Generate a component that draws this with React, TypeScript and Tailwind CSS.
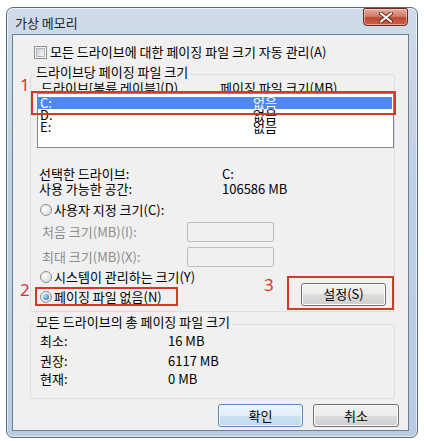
import type { ReactNode } from "react";

function Checkbox() {
  return (
    <span className="flex h-[13px] w-[13px] shrink-0 items-center justify-center border border-[#8e8f8f] bg-[#f6f6f6]">
      <span className="h-[9px] w-[9px] border border-[#b4b8bd] bg-[linear-gradient(135deg,#c9ced4,#f8f8f8)]" />
    </span>
  );
}

function Radio({ checked }: { checked?: boolean }) {
  return (
    <span className="flex h-[12px] w-[12px] shrink-0 items-center justify-center rounded-full border border-[#8e8f8f] bg-[radial-gradient(circle_at_40%_40%,#ffffff,#d2d2d2)]">
      {checked && (
        <span className="h-[6px] w-[6px] rounded-full bg-[radial-gradient(circle_at_35%_35%,#b5e2ff,#1a5cb0)]" />
      )}
    </span>
  );
}

function WinButton({ children, primary, width }: { children: ReactNode; primary?: boolean; width: string }) {
  return (
    <button
      type="button"
      className={
        primary
          ? `${width} flex h-[23px] items-center justify-center rounded-[3px] border border-[#4f8cc1] bg-[linear-gradient(#eef6fc,#e0eef9_50%,#cde2f4_50%,#c0d9ef)] shadow-[inset_0_0_0_1px_#f4fafe]`
          : `${width} flex h-[23px] items-center justify-center rounded-[3px] border border-[#707070] bg-[linear-gradient(#f2f2f2,#ebebeb_50%,#dddddd_50%,#cfcfcf)] shadow-[inset_0_0_0_1px_#fcfcfc]`
      }
    >
      {children}
    </button>
  );
}

function Legend({ children }: { children: ReactNode }) {
  return <legend className="ml-[3px] px-[2px] pb-[4px] leading-[14px]">{children}</legend>;
}

export default function App() {
  return (
    <div className="relative h-[441px] w-[424px] overflow-hidden bg-white font-['Noto_Sans_CJK_KR',sans-serif] text-[13px] text-black">
      {/* window frame */}
      <div className="ml-[6px] mt-[7px] flex h-[431px] w-[412px] flex-col rounded-[7px] border border-[#5b6b7e] bg-[linear-gradient(180deg,#cfdbe8,#bfd0e3_40%,#b9cbe1)] shadow-[inset_0_0_0_1px_rgba(255,255,255,0.55)]">
        {/* title bar */}
        <div className="flex h-[26px] items-start">
          <span className="pl-[8px] pt-[8px] leading-[14px] text-[#1e1e1e]">가상 메모리</span>
          <div className="ml-auto mr-[9px] flex h-[18px] w-[45px] items-center justify-center rounded-b-[4px] rounded-t-[2px] border border-[#6b2a22] bg-[linear-gradient(#e6aca0,#d27a68_45%,#bd4a34_55%,#c8604a)] shadow-[inset_0_0_0_1px_rgba(255,230,220,0.5)]">
            <svg width="14" height="11" viewBox="0 0 14 11">
              <path d="M2 1.5 L12 9.5 M12 1.5 L2 9.5" stroke="#5a2a22" strokeWidth="4" strokeLinecap="round" />
              <path d="M2 1.5 L12 9.5 M12 1.5 L2 9.5" stroke="#ffffff" strokeWidth="2.2" strokeLinecap="round" />
            </svg>
          </div>
        </div>

        {/* client area */}
        <div className="ml-[5px] flex h-[397px] w-[397px] flex-col border border-[#6d7f94] bg-[#f0f0f0]">
          <div className="mt-[10px] flex h-[14px] items-center gap-[3px] pl-[21px]">
            <Checkbox />
            <span>모든 드라이브에 대한 페이징 파일 크기 자동 관리(A)</span>
          </div>

          <fieldset className="ml-[17px] mt-[6px] w-[365px] rounded-[3px] border border-[#d5dfe5] pb-[5px]">
            <Legend>드라이브당 페이징 파일 크기</Legend>
            <div className="flex h-[10px] pl-[10px] leading-[10px]">
              <span className="w-[179px]">드라이브[볼륨 레이블](D)</span>
              <span>페이징 파일 크기(MB)</span>
            </div>
            <div className="relative ml-[6px] h-[55px] w-[357px] border border-[#828790] bg-white pt-[3px] leading-[12px]">
              <div className="mr-[1px] flex h-[12px] bg-[#4f88f0] pl-[2px] text-white">
                <span className="w-[213px]">C:</span>
                <span>없음</span>
              </div>
              <div className="flex h-[12px] pl-[2px]">
                <span className="w-[213px]">D:</span>
                <span>없음</span>
              </div>
              <div className="flex h-[12px] pl-[2px]">
                <span className="w-[213px]">E:</span>
                <span>없음</span>
              </div>
            </div>

            <div className="mt-[18px] flex h-[15px] items-center pl-[8px]">
              <span className="w-[183px]">선택한 드라이브:</span>
              <span>C:</span>
            </div>
            <div className="flex h-[15px] items-center pl-[8px]">
              <span className="w-[183px]">사용 가능한 공간:</span>
              <span>106586 MB</span>
            </div>

            <div className="mt-[5px] flex h-[18px] items-center gap-[2px] pl-[9px]">
              <Radio />
              <span>사용자 지정 크기(C):</span>
            </div>
            <div className="mt-[3px] flex h-[20px] items-center pl-[11px] text-[#8c8c8c]">
              <span className="w-[145px]">처음 크기(MB)(I):</span>
              <span className="h-[20px] w-[87px] rounded-[2px] border border-[#bcbcbc] bg-[#f0f0f0]" />
            </div>
            <div className="mt-[5px] flex h-[20px] items-center pl-[11px] text-[#8c8c8c]">
              <span className="w-[145px]">최대 크기(MB)(X):</span>
              <span className="h-[20px] w-[87px] rounded-[2px] border border-[#bcbcbc] bg-[#f0f0f0]" />
            </div>

            <div className="mt-[2px] flex items-start">
              <div className="flex flex-col pl-[9px]">
                <div className="flex h-[16px] items-center gap-[2px]">
                  <Radio />
                  <span>시스템이 관리하는 크기(Y)</span>
                </div>
                <div className="mt-[4px] flex h-[16px] items-center gap-[2px]">
                  <Radio checked />
                  <span>페이징 파일 없음(N)</span>
                </div>
              </div>
              <div className="ml-auto mr-[8px] mt-[14px]">
                <WinButton width="w-[85px]">
                  <span className="h-[21px] leading-[19px]">설정(S)</span>
                </WinButton>
              </div>
            </div>
          </fieldset>

          <fieldset className="ml-[17px] mt-[3px] w-[365px] rounded-[3px] border border-[#d5dfe5] pb-[11px]">
            <Legend>모든 드라이브의 총 페이징 파일 크기</Legend>
            <div className="flex h-[16px] items-center pl-[9px]">
              <span className="w-[128px]">최소:</span>
              <span>16 MB</span>
            </div>
            <div className="mt-[4px] flex h-[16px] items-center pl-[9px]">
              <span className="w-[128px]">권장:</span>
              <span>6117 MB</span>
            </div>
            <div className="mt-[2px] flex h-[16px] items-center pl-[9px]">
              <span className="w-[128px]">현재:</span>
              <span>0 MB</span>
            </div>
          </fieldset>

          <div className="mt-[5px] flex justify-end gap-[10px] pr-[9px]">
            <WinButton primary width="w-[85px]">확인</WinButton>
            <WinButton width="w-[86px]">취소</WinButton>
          </div>
        </div>
      </div>

      {/* red annotations */}
      <div className="absolute left-[31px] top-[91px] h-[24px] w-[365px] border-2 border-[#d5382b]" />
      <div className="absolute left-[35px] top-[287px] h-[19px] w-[143px] border-2 border-[#d5382b]" />
      <div className="absolute left-[287px] top-[276px] h-[34px] w-[107px] border-2 border-[#d5382b]" />
      <span className="absolute left-[20px] top-[75px] font-['Noto_Sans',sans-serif] text-[17px] leading-[20px] text-[#d5382b]">1</span>
      <span className="absolute left-[20px] top-[280px] font-['Noto_Sans',sans-serif] text-[17px] leading-[20px] text-[#d5382b]">2</span>
      <span className="absolute left-[264px] top-[275px] font-['Noto_Sans',sans-serif] text-[17px] leading-[20px] text-[#d5382b]">3</span>
    </div>
  );
}
